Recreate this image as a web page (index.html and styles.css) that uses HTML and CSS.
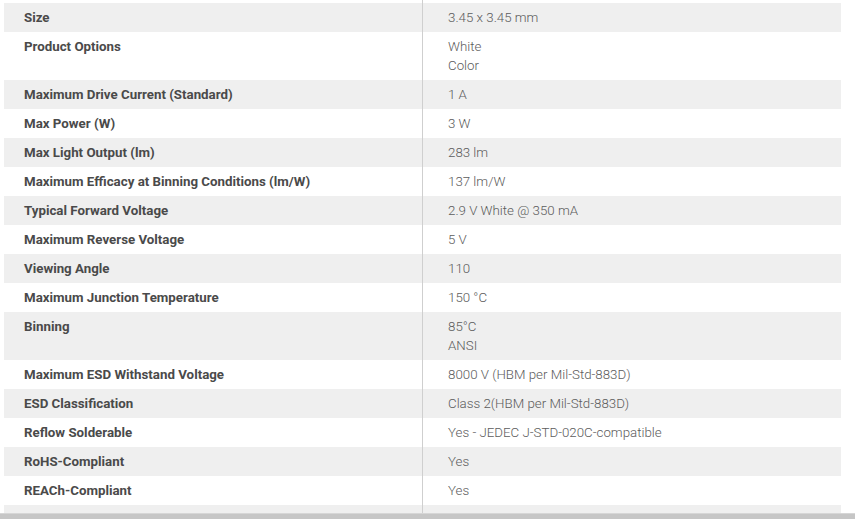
FILE: index.html
```html
<!DOCTYPE html>
<html lang="en">
<head>
<meta charset="utf-8">
<title>Specifications</title>
<link rel="stylesheet" href="styles.css">
</head>
<body>
<div class="page">
  <table class="specs">
    <tr class="cut-top"><td></td><td class="val"></td></tr>
    <tr class="shade"><th>Size</th><td class="val">3.45 x 3.45 mm</td></tr>
    <tr><th>Product Options</th><td class="val">White<br>Color</td></tr>
    <tr class="shade"><th>Maximum Drive Current (Standard)</th><td class="val">1 A</td></tr>
    <tr><th>Max Power (W)</th><td class="val">3 W</td></tr>
    <tr class="shade"><th>Max Light Output (lm)</th><td class="val">283 lm</td></tr>
    <tr><th>Maximum Efficacy at Binning Conditions (lm/W)</th><td class="val">137 lm/W</td></tr>
    <tr class="shade"><th>Typical Forward Voltage</th><td class="val">2.9 V White @ 350 mA</td></tr>
    <tr><th>Maximum Reverse Voltage</th><td class="val">5 V</td></tr>
    <tr class="shade"><th>Viewing Angle</th><td class="val">110</td></tr>
    <tr><th>Maximum Junction Temperature</th><td class="val">150 °C</td></tr>
    <tr class="shade"><th>Binning</th><td class="val">85°C<br>ANSI</td></tr>
    <tr><th>Maximum ESD Withstand Voltage</th><td class="val">8000 V (HBM per Mil-Std-883D)</td></tr>
    <tr class="shade"><th>ESD Classification</th><td class="val">Class 2(HBM per Mil-Std-883D)</td></tr>
    <tr><th>Reflow Solderable</th><td class="val">Yes - JEDEC J-STD-020C-compatible</td></tr>
    <tr class="shade"><th>RoHS-Compliant</th><td class="val">Yes</td></tr>
    <tr><th>REACh-Compliant</th><td class="val">Yes</td></tr>
    <tr class="shade cut-bottom"><td></td><td class="val"></td></tr>
  </table>
  <div class="hscroll"></div>
</div>
</body>
</html>
```
FILE: styles.css
```css
html, body {
  margin: 0;
  padding: 0;
  background: #ffffff;
  overflow: hidden;
}

.page {
  width: 855px;
  height: 519px;
  display: flex;
  flex-direction: column;
}

.specs {
  margin-left: 4px;
  width: 837px;
  border-collapse: collapse;
  table-layout: fixed;
  font-family: Roboto, "Liberation Sans", sans-serif;
  font-size: 13.3px;
  line-height: 19px;
}

.specs th,
.specs td {
  padding: 5px 0 5px 20px;
  vertical-align: top;
  text-align: left;
}

.specs th {
  width: 399px;
  font-weight: 700;
  color: #4a4a4a;
}

.specs td.val {
  border-left: 1px solid #cfcfcf;
  padding-left: 25px;
  font-weight: 300;
  color: #5c5c5c;
}

.specs tr.shade {
  background: #efefef;
}

.specs tr.cut-top td {
  height: 3px;
  padding: 0;
}

.specs tr.cut-bottom td {
  height: 8px;
  padding: 0;
}

.hscroll {
  height: 6px;
  background: #c6c6c6;
  border-top: 1px solid #d6d6d6;
}
```
